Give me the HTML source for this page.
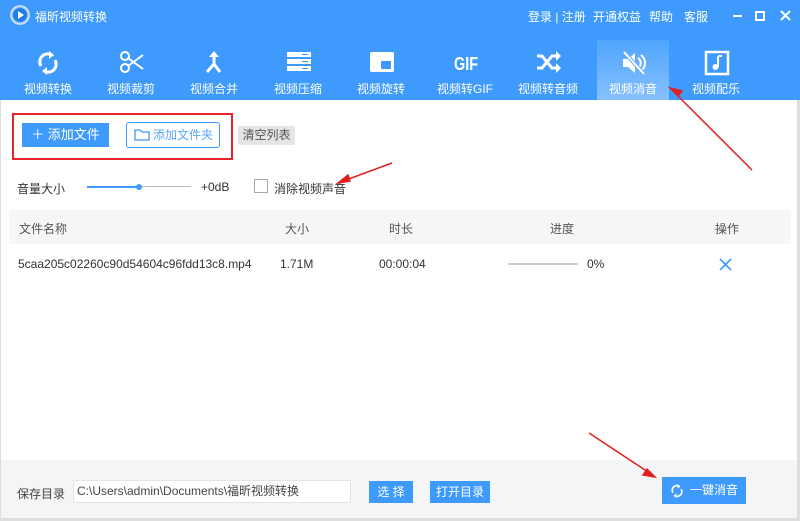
<!DOCTYPE html>
<html><head><meta charset="utf-8"><style>
*{margin:0;padding:0;box-sizing:border-box}
body{width:800px;height:521px;overflow:hidden;background:#fff;font-family:"Liberation Sans","Noto Sans CJK SC",sans-serif;position:relative;font-size:12px;color:#333}
.hdr{position:absolute;left:0;top:0;width:800px;height:100px;background:#3e9afd}
.t{position:absolute;color:#fff}
.tab{position:absolute;top:40px;width:72px;height:60px;text-align:center;color:#fff;font-size:12px}
.tab svg{position:absolute;left:24px;top:10px}
.tab span{position:absolute;left:0;right:0;top:40px;white-space:nowrap}
.act{background:linear-gradient(#4fa5fd,#86c0fe)}
.abs{position:absolute}
.btn{position:absolute;font-size:12px;text-align:center}
</style></head><body>
<div class="hdr">
 <div class="abs" style="left:10px;top:5px;width:20px;height:20px;border-radius:50%;background:radial-gradient(circle at 50% 50%,#1e7ce8 0,#1e7ce8 45%,#cfe6ff 60%,#3a8ff0 100%)"></div>
 <div class="abs" style="left:18px;top:11px;width:0;height:0;border-left:6px solid #fff;border-top:4px solid transparent;border-bottom:4px solid transparent"></div>
 <div class="t" style="left:35px;top:8px;font-size:12px">福昕视频转换</div>
 <div class="t" style="left:528px;top:8px;font-size:12px">登录 | 注册</div>
 <div class="t" style="left:593px;top:8px;font-size:12px">开通权益</div>
 <div class="t" style="left:649px;top:8px;font-size:12px">帮助</div>
 <div class="t" style="left:684px;top:8px;font-size:12px">客服</div>
 <div class="abs" style="left:733px;top:15px;width:9px;height:2px;background:#fff"></div>
 <div class="abs" style="left:755px;top:11px;width:10px;height:10px;border:2px solid #fff"></div>
 <svg class="abs" style="left:780px;top:10px" width="11" height="11"><path d="M1 1L10 10M10 1L1 10" stroke="#fff" stroke-width="2"/></svg>

 <div class="tab" style="left:12px"><svg width="24" height="26" viewBox="0 0 24 26"><path d="M5 16A8 8 0 0 1 16 5M19 10A8 8 0 0 1 8 21" fill="none" stroke="#fff" stroke-width="3"/><path d="M13 1l5 4-5 4zM11 17l-5 4 5 4z" fill="#fff"/></svg><span>视频转换</span></div>
 <div class="tab" style="left:95px"><svg width="26" height="24" viewBox="0 0 26 24"><circle cx="6" cy="6" r="4" fill="none" stroke="#fff" stroke-width="2"/><circle cx="6" cy="18" r="4" fill="none" stroke="#fff" stroke-width="2"/><path d="M9 8L24 19M9 16L24 5" stroke="#fff" stroke-width="2"/></svg><span>视频裁剪</span></div>
 <div class="tab" style="left:178px"><svg width="24" height="26" viewBox="0 0 24 26"><path d="M12 3V14L5 22M12 14L18 22" fill="none" stroke="#fff" stroke-width="3"/><path d="M7 7L12 1L17 7z" fill="#fff"/></svg><span>视频合并</span></div>
 <div class="tab" style="left:262px"><svg width="26" height="24" viewBox="0 0 26 24"><rect x="1" y="2" width="24" height="5" fill="#fff"/><rect x="1" y="9" width="24" height="5" fill="#fff"/><rect x="1" y="16" width="24" height="5" fill="#fff"/><path d="M16 4.5h6M16 11.5h6M16 18.5h6" stroke="#3e9afd" stroke-width="1"/></svg><span>视频压缩</span></div>
 <div class="tab" style="left:345px"><svg width="26" height="24" viewBox="0 0 26 24"><rect x="1" y="2" width="24" height="20" rx="2" fill="#fff"/><rect x="12" y="11" width="10" height="8" fill="#3e9afd"/></svg><span>视频旋转</span></div>
 <div class="tab" style="left:429px"><svg width="26" height="24" viewBox="0 0 26 24"><text x="1" y="20" fill="#fff" font-size="18" font-weight="bold" font-family="Liberation Sans Narrow, Liberation Sans" textLength="24" lengthAdjust="spacingAndGlyphs">GIF</text></svg><span>视频转GIF</span></div>
 <div class="tab" style="left:512px"><svg width="26" height="24" viewBox="0 0 26 24"><path d="M1 6h5l10 12h5M1 18h5l10-12h5" fill="none" stroke="#fff" stroke-width="3"/><path d="M20 1l5 5-5 5zM20 13l5 5-5 5z" fill="#fff"/></svg><span>视频转音频</span></div>
 <div class="tab act" style="left:597px"><svg width="26" height="26" viewBox="0 0 26 26"><path d="M2 9h5l7-6v20l-7-6H2z" fill="#fff"/><path d="M17 8a6 6 0 0 1 0 10M20 5a10 10 0 0 1 0 16" fill="none" stroke="#fff" stroke-width="2"/><path d="M3 2L23 24" stroke="#6aaffd" stroke-width="4"/><path d="M3 2L23 24" stroke="#fff" stroke-width="2"/></svg><span>视频消音</span></div>
 <div class="tab" style="left:680px"><svg width="26" height="26" viewBox="0 0 26 26"><rect x="2" y="2" width="22" height="22" fill="none" stroke="#fff" stroke-width="2.5"/><path d="M14 6v11" stroke="#fff" stroke-width="2"/><path d="M14 6h4" stroke="#fff" stroke-width="2"/><circle cx="11.5" cy="17" r="3" fill="#fff"/></svg><span>视频配乐</span></div>
</div>
<div class="abs" style="left:0;top:100px;width:1px;height:421px;background:#ddd"></div>
<div class="abs" style="right:0;top:100px;width:3px;height:421px;background:#ddd"></div>

<div class="abs" style="left:12px;top:113px;width:221px;height:47px;border:2px solid #e8232a"></div>
<div class="btn" style="left:22px;top:123px;width:87px;height:24px;background:#3e9afd;color:#fff;font-size:13px;line-height:24px">＋ 添加文件</div>
<div class="btn" style="left:126px;top:122px;width:94px;height:26px;border:1px solid #3e9afd;border-radius:3px;color:#5aa8fd;line-height:24px;padding-left:20px">添加文件夹
 <svg class="abs" style="left:7px;top:6px" width="16" height="12"><path d="M1 1h5l2 2h7v8H1z" fill="none" stroke="#3e9afd" stroke-width="1.3"/></svg></div>
<div class="btn" style="left:238px;top:126px;width:57px;height:19px;background:#e4e5e7;border-radius:2px;color:#555;line-height:19px">清空列表</div>

<div class="abs" style="left:17px;top:180px">音量大小</div>
<div class="abs" style="left:87px;top:186px;width:52px;height:2px;background:#3e9afd"></div>
<div class="abs" style="left:139px;top:186px;width:52px;height:1px;background:#bbb"></div>
<div class="abs" style="left:136px;top:184px;width:6px;height:6px;border-radius:50%;background:#3e9afd"></div>
<div class="abs" style="left:201px;top:180px">+0dB</div>
<div class="abs" style="left:254px;top:179px;width:14px;height:14px;border:1px solid #aaa"></div>
<div class="abs" style="left:274px;top:180px">消除视频声音</div>

<div class="abs" style="left:9px;top:210px;width:782px;height:34px;background:#f5f6f8"></div>
<div class="abs" style="left:19px;top:220px;color:#555">文件名称</div>
<div class="abs" style="left:285px;top:220px;color:#555">大小</div>
<div class="abs" style="left:389px;top:220px;color:#555">时长</div>
<div class="abs" style="left:550px;top:220px;color:#555">进度</div>
<div class="abs" style="left:715px;top:220px;color:#555">操作</div>
<div class="abs" style="left:18px;top:257px">5caa205c02260c90d54604c96fdd13c8.mp4</div>
<div class="abs" style="left:280px;top:257px">1.71M</div>
<div class="abs" style="left:379px;top:257px">00:00:04</div>
<div class="abs" style="left:508px;top:263px;width:70px;height:2px;background:#ccc"></div>
<div class="abs" style="left:587px;top:257px">0%</div>
<svg class="abs" style="left:719px;top:258px" width="13" height="13"><path d="M1 1L12 12M12 1L1 12" stroke="#3e9afd" stroke-width="1.6"/></svg>

<div class="abs" style="left:1px;top:460px;width:796px;height:58px;background:#f4f5f6"></div>
<div class="abs" style="left:0;top:518px;width:800px;height:3px;background:#ddd"></div>
<div class="abs" style="left:17px;top:485px;color:#444">保存目录</div>
<div class="abs" style="left:73px;top:480px;width:278px;height:23px;background:#fff;border:1px solid #e4e4e4;padding-left:3px;line-height:21px;color:#444">C:\Users\admin\Documents\福昕视频转换</div>
<div class="btn" style="left:369px;top:481px;width:44px;height:22px;background:#3e9afd;color:#fff;line-height:22px">选 择</div>
<div class="btn" style="left:430px;top:481px;width:60px;height:22px;background:#3e9afd;color:#fff;line-height:22px">打开目录</div>
<div class="btn" style="left:662px;top:477px;width:84px;height:27px;background:#3e9afd;color:#fff;line-height:27px;padding-left:20px">一键消音
 <svg class="abs" style="left:8px;top:6px" width="14" height="16" viewBox="0 0 24 26"><path d="M5 16A8 8 0 0 1 16 5M19 10A8 8 0 0 1 8 21" fill="none" stroke="#fff" stroke-width="3"/><path d="M13 1l5 4-5 4zM11 17l-5 4 5 4z" fill="#fff"/></svg></div>

<svg class="abs" style="left:0;top:0" width="800" height="521">
 <g stroke="#e02020" stroke-width="1.5" fill="#e02020">
  <path d="M752 170L678 96" fill="none"/><path d="M670 88l12 3-4 5z"/>
  <path d="M392 163L346 180" fill="none"/><path d="M338 183l10-8 2 6z"/>
  <path d="M589 433L648 472" fill="none"/><path d="M655 477l-12-2 4-6z"/>
 </g>
</svg>
</body></html>
